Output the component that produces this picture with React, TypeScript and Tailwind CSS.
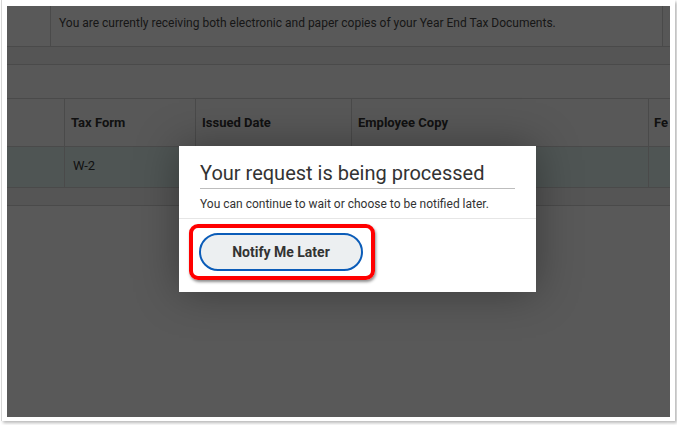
import React from "react";

const cols = [
  { label: "", w: "w-[58px]" },
  { label: "Tax Form", w: "w-[131px]" },
  { label: "Issued Date", w: "w-[156px]" },
  { label: "Employee Copy", w: "w-[297px]" },
];

export default function App() {
  return (
    <div className="w-[677px] h-[425px] bg-white font-['Roboto',sans-serif]">
      <div className="ml-[1px] w-[674px] h-[421px] bg-white border-l border-[#d6d6d6] pl-[5px] pt-[6px] pr-[4px] pb-[4px] shadow-[2px_2px_3px_rgba(0,0,0,0.28)]">
        <div className="relative w-[663px] h-[411px] overflow-hidden bg-white">
          {/* page behind the mask */}
          <div className="flex h-[41px] border-b border-[#d4d4d4] bg-white">
            <div className="w-[44px] border-r border-[#d4d4d4]" />
            <div className="w-[612px] border-r border-[#d4d4d4] pl-[8px] pt-[7px] text-[12px] leading-[20px] text-[#444]">
              You are currently receiving both electronic and paper copies of your Year End Tax Documents.
            </div>
            <div className="flex-1 bg-[#fafafa]" />
          </div>
          <div className="h-[18px] border-b border-[#d4d4d4] bg-[#f3f3f3]" />
          <div className="h-[34px] border-b border-[#d4d4d4] bg-[#fcfcfc]" />

          {/* table header */}
          <div className="flex h-[48px] border-b border-[#d4d4d4] bg-[#fcfcfc]">
            {cols.map((c, i) => (
              <div
                key={i}
                className={`${c.w} shrink-0 border-r border-[#d4d4d4] flex items-center pl-[6px] text-[13px] font-bold text-[#333]`}
              >
                {c.label}
              </div>
            ))}
            <div className="flex-1 min-w-0 overflow-hidden flex items-center pl-[5px] text-[13px] font-bold text-[#333] whitespace-nowrap">
              Fe
            </div>
          </div>

          {/* selected row */}
          <div className="flex h-[41px] border-b border-[#d4d4d4] bg-[#e2f3f1]">
            <div className="w-[58px] shrink-0 border-r border-[#d4d4d4]" />
            <div className="w-[131px] shrink-0 border-r border-[#d4d4d4] flex items-center pl-[8px] pb-[3px] text-[13px] text-[#333]">
              W-2
            </div>
            <div className="w-[156px] shrink-0" />
            <div className="w-[297px] shrink-0 border-r border-[#d4d4d4]" />
            <div className="flex-1" />
          </div>
          <div className="h-[18px] border-b border-[#d4d4d4] bg-[#f3f3f3]" />

          {/* mask */}
          <div className="absolute inset-0 bg-black/[0.65]" />

          {/* dialog */}
          <div className="absolute left-[172px] top-[140px] w-[357px] h-[146px] bg-white shadow-[0_0_40px_rgba(0,0,0,0.35)]">
            <div className="border-b border-[#e6e6e6] pb-[6px]">
              <div className="px-[21px] pt-[12px]">
                <div className="border-b border-[#bdbdbd] text-[20px] leading-[30px] text-[#333]">
                  Your request is being processed
                </div>
                <div className="mt-[7px] text-[12px] leading-[16px] text-[#333]">
                  You can continue to wait or choose to be notified later.
                </div>
              </div>
            </div>
            <div className="pl-[20px] pt-[14px]">
              <button className="w-[164px] h-[38px] rounded-full border-2 border-[#0b5cb8] bg-[#eceff1] text-[14px] font-bold text-[#333]">
                Notify Me Later
              </button>
            </div>

            {/* annotation */}
            <div className="absolute left-[10px] top-[78px] w-[186px] h-[56px] rounded-[9px] border-[4px] border-[#ff0000] shadow-[1px_2px_3px_rgba(0,0,0,0.45)]" />
          </div>
        </div>
      </div>
    </div>
  );
}
